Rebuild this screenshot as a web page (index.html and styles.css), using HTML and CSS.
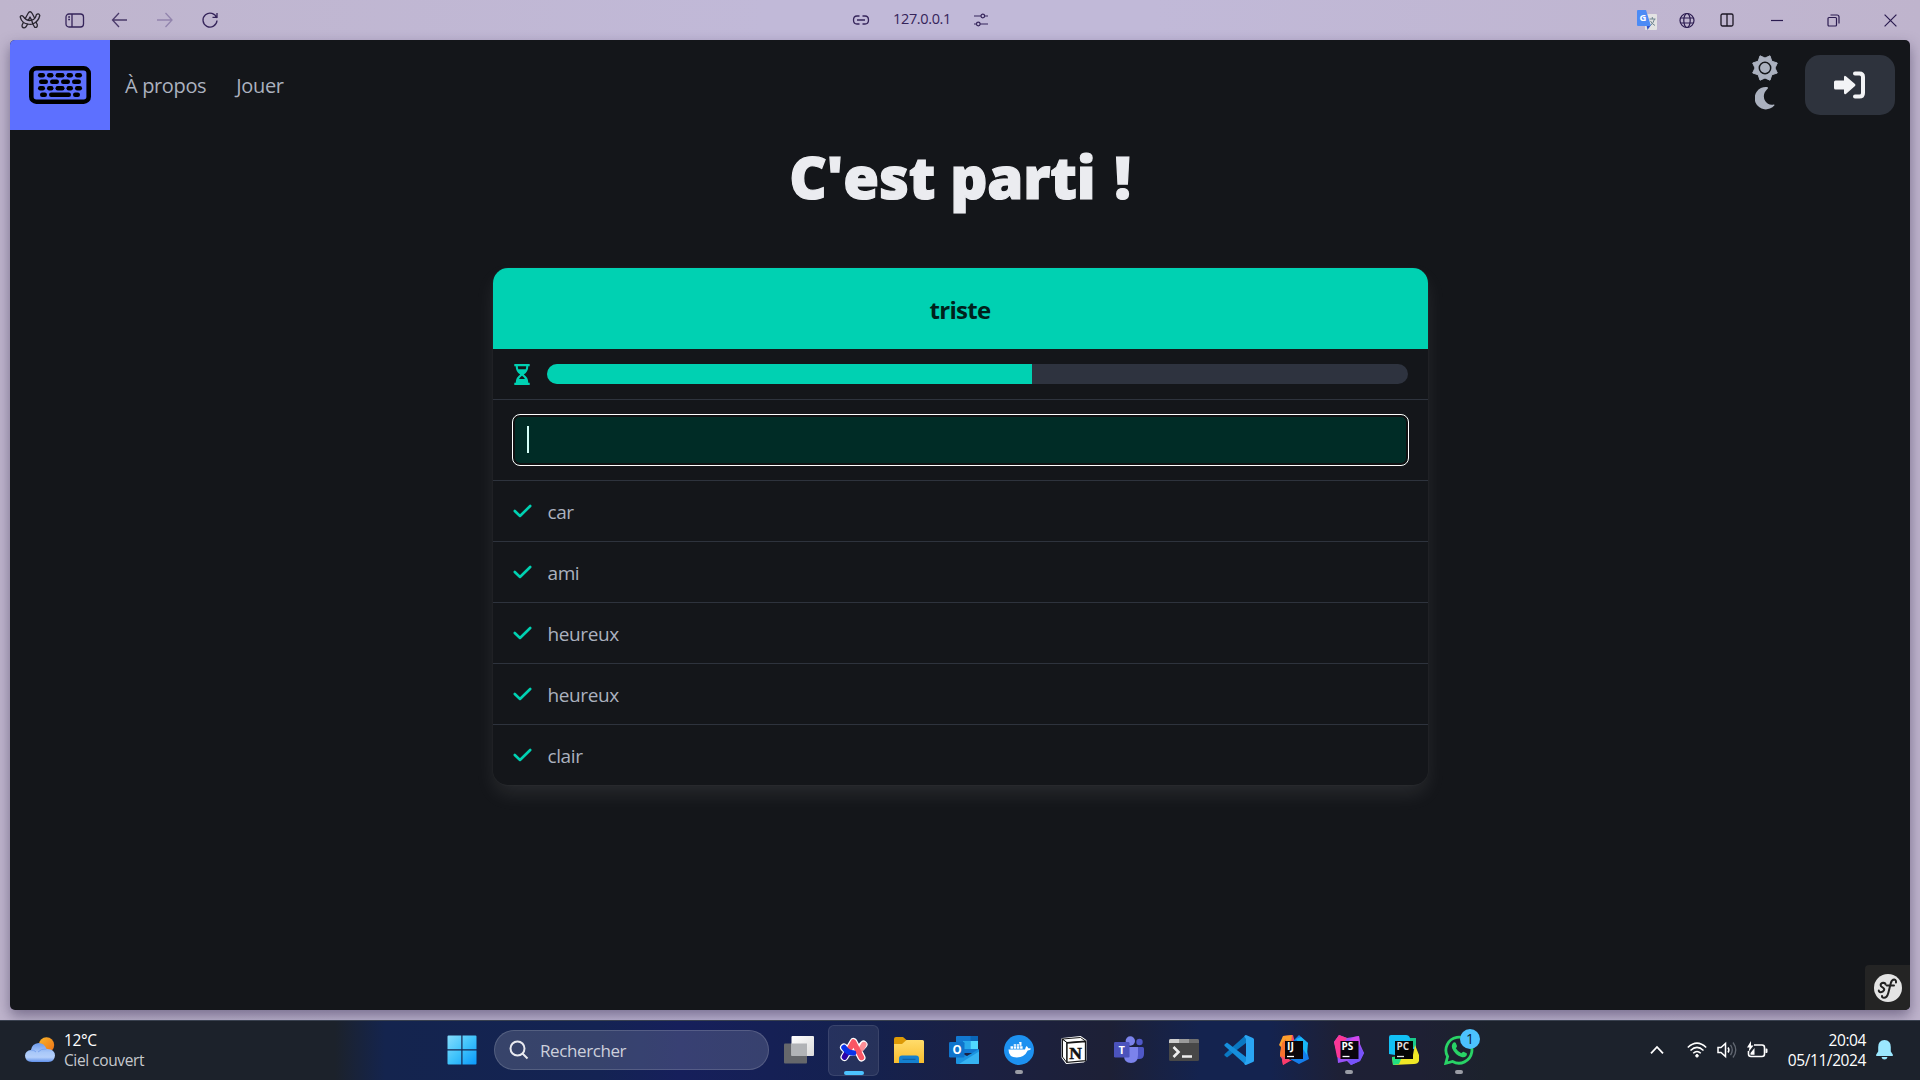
FILE: index.html
```html
<!DOCTYPE html>
<html lang="fr">
<head>
<meta charset="utf-8">
<title>C'est parti !</title>
<link rel="stylesheet" href="styles.css">
</head>
<body>
<div class="desktop">
  <header class="titlebar">
    <div class="tb-left">
      <span class="tb-btn"><svg width="22" height="20" viewBox="0 0 22 20" fill="none" stroke="#29252f" stroke-width="1.300" stroke-linejoin="round"><path d="M3 16.500Q2.600 15.500 4.300 12.600M6 9L9 3.500Q11 0 13.200 3.500L15.600 8M17 12L18.300 14.800Q18.600 18 15.700 17.300L13.800 14M8.700 14L7 16.800Q4.800 19 3 16.500"/><path d="M9.200 10.500L11 7L12.700 10.200M8.700 14Q11.500 14.800 13.800 14Q19.500 11.500 20.800 5.500Q19.500 2.800 17.300 4.800Q16.500 9 12.700 10.200Q8 11.500 4.500 6.800Q2.500 4.500 1.200 6.800Q2 10.500 4.500 12.500Q6.500 13.800 8.700 14M13.800 14L12.700 10.200"/></svg></span>
      <span class="tb-btn"><svg width="20" height="16" viewBox="0 0 20 16" fill="none" stroke="#35245a" stroke-width="1.3"><rect x="1" y="2" width="17.500" height="13" rx="3"/><path d="M7 2V15M3.200 5H5M3.200 7.500H5"/></svg></span>
      <span class="tb-btn"><svg width="18" height="16" viewBox="0 0 18 16" fill="none" stroke="#4a3a6a" stroke-width="1.300"><path d="M8 1L1.500 8L8 15M1.500 8H16"/></svg></span>
      <span class="tb-btn"><svg width="18" height="16" viewBox="0 0 18 16" fill="none" stroke="#9284ad" stroke-width="1.300"><path d="M9.500 1L16 8L9.500 15M16 8H1"/></svg></span>
      <span class="tb-btn"><svg width="18" height="18" viewBox="0 0 18 18" fill="none" stroke="#35245a" stroke-width="1.300"><path d="M15.700 7A7 7 0 1 0 16 9.500M16 2V6.300H11.500"/></svg></span>
    </div>
    <div class="tb-mid">
      <svg width="18" height="12" viewBox="0 0 18 12" fill="none" stroke="#35245a" stroke-width="1.300"><path d="M7.500 2H5Q1.500 2 1.500 6T5 10H7.500M10.500 2H13Q16.500 2 16.500 6T13 10H10.500M5 6H13"/></svg>
      <span class="tb-url">127.0.0.1</span>
      <svg width="16" height="14" viewBox="0 0 16 14" fill="none" stroke="#35245a" stroke-width="1.200"><path d="M1 3H8M11.500 3H15M1 11H3.500M7 11H15"/><circle cx="9.800" cy="3" r="1.800"/><circle cx="5.300" cy="11" r="1.800"/></svg>
    </div>
    <div class="tb-ext">
      <span><svg width="20" height="20" viewBox="0 0 20 20"><rect x="8" y="4" width="12" height="16" rx="1" fill="#e3e3e3"/><path d="M9.500 15H14L10.500 20Z" fill="#3052c8"/><path d="M1 0H9L14 16H1Q0 16 0 15V1Q0 0 1 0Z" fill="#4c8bf5"/><path d="M12.500 9H18.500M15.300 7V9M17.500 9Q16.500 13 13.500 15.500M13.500 11Q15 14 18 15.500" fill="none" stroke="#6f8590" stroke-width="1"/><text x="2.600" y="11.300" font-size="9.500" font-weight="700" fill="#fff">G</text></svg></span>
      <span><svg width="18" height="18" viewBox="0 0 18 18" fill="none" stroke="#2b1b50" stroke-width="1.200"><circle cx="9" cy="9.500" r="7"/><ellipse cx="9" cy="9.500" rx="3.200" ry="7"/><path d="M3 7H15M3 12H15"/></svg></span>
      <span><svg width="14" height="14" viewBox="0 0 14 14" fill="none" stroke="#1c1724" stroke-width="1.300"><rect x="1" y="1" width="12" height="12" rx="1.500"/><path d="M7 1V13"/></svg></span>
    </div>
    <div class="tb-win">
      <span><svg width="12" height="12" viewBox="0 0 12 12"><path d="M0 6.500H12" stroke="#2b1b50" stroke-width="1.200"/></svg></span>
      <span><svg width="13" height="13" viewBox="0 0 13 13" fill="none" stroke="#2b1b50" stroke-width="1.200"><rect x="1" y="3.500" width="8.500" height="8.500" rx="1"/><path d="M3.500 1H10Q12 1 12 3V9.500"/></svg></span>
      <span><svg width="13" height="13" viewBox="0 0 13 13" stroke="#2b1b50" stroke-width="1.200"><path d="M.6.6L12.400 12.400M12.400.6L.6 12.400"/></svg></span>
    </div>
  </header>

  <main class="window">
    <nav class="navbar">
      <a class="brand"><svg width="62" height="38" viewBox="0 0 62 38"><rect x="2.300" y="2.300" width="57.400" height="33.400" rx="5" fill="none" stroke="#000" stroke-width="4.600"/><g fill="#000"><rect x="9" y="7" width="7" height="4.400" rx="2.200"/><rect x="18" y="7" width="6.500" height="4.400" rx="2.200"/><rect x="26.500" y="7" width="9" height="4.400" rx="2.200"/><rect x="37.500" y="7" width="6.500" height="4.400" rx="2.200"/><rect x="46" y="7" width="7" height="4.400" rx="2.200"/><rect x="10" y="13.500" width="9" height="4.400" rx="2.200"/><rect x="21" y="13.500" width="9" height="4.400" rx="2.200"/><rect x="32" y="13.500" width="9" height="4.400" rx="2.200"/><rect x="43" y="13.500" width="9" height="4.400" rx="2.200"/><rect x="9" y="20" width="7" height="4.400" rx="2.200"/><rect x="18" y="20" width="6.500" height="4.400" rx="2.200"/><rect x="26.500" y="20" width="9" height="4.400" rx="2.200"/><rect x="37.500" y="20" width="6.500" height="4.400" rx="2.200"/><rect x="46" y="20" width="7" height="4.400" rx="2.200"/><rect x="11" y="26.500" width="7" height="4.400" rx="2.200"/><rect x="20" y="26.500" width="22" height="4.400" rx="2.200"/><rect x="44" y="26.500" width="7" height="4.400" rx="2.200"/></g></svg></a>
      <a class="nav-link">À propos</a>
      <a class="nav-link">Jouer</a>
      <div class="nav-end">
        <div class="theme">
          <svg width="26" height="26" viewBox="-13 -13 26 26"><path d="M0-10L5-12.200L6.800-6.800L12.300-5L10 0L12.300 5L6.800 6.800L5 12.200L0 10L-5 12.200L-6.800 6.800L-12.300 5L-10 0L-12.300-5L-6.800-6.800L-5-12.200Z" fill="#abb1bf" stroke="#abb1bf" stroke-linejoin="round"/><circle r="5.700" fill="none" stroke="#14161a" stroke-width="1.500"/></svg>
          <svg width="20" height="24" viewBox="0 0 20 24"><path d="M11.500 1A11.200 11.200 0 1 0 19.500 19.300Q19.800 18.300 18.700 18.500Q13 19.500 10.200 15Q6.500 8.500 12.800 2.500Q13.800 1.200 11.500 1Z" fill="#abb1bf"/></svg>
        </div>
        <a class="login"><svg width="34" height="28" viewBox="0 0 34 28"><path d="M2.500 9.500H11V6.500Q11 3.700 13.200 5.500L22 13Q23 14 22 15L13.200 22.700Q11 24.300 11 21.500V18.500H2.500Q1 18.500 1 17V11Q1 9.500 2.500 9.500Z" fill="#f3f4f6"/><path d="M22 2.500H26.500Q30 2.500 30 6V22Q30 25.500 26.500 25.500H22" fill="none" stroke="#f3f4f6" stroke-width="4" stroke-linecap="round"/></svg></a>
      </div>
    </nav>

    <h1 class="title">C'est parti <span class="mark">!</span></h1>

    <section class="panel">
      <p class="panel-heading">triste</p>
      <div class="panel-block timer">
        <span class="panel-icon"><svg width="16" height="21" viewBox="0 0 16 21"><path d="M.3 0H15.700V2.200H14.300Q14.300 7.500 9.800 10.500Q14.300 13.500 14.300 18.800H15.700V21H.3V18.800H1.700Q1.700 13.500 6.200 10.500Q1.700 7.500 1.700 2.200H.3Z" fill="#00d1b2"/><path d="M3.800 2.300H12.200Q12.200 3.800 11.700 5.200H4.300Q3.800 3.800 3.800 2.300ZM8 11.800Q10 13 11 15H5Q6 13 8 11.800Z" fill="#14161a"/></svg></span>
        <div class="progress"><div class="progress-value" style="width:56.33%"></div></div>
      </div>
      <div class="panel-block entry"><div class="input"><span class="caret"></span></div></div>
      <div class="panel-block word"><span class="panel-icon"><svg width="19" height="14" viewBox="0 0 19 14"><path d="M1.800 7L7 12L17.200 2" fill="none" stroke="#00d1b2" stroke-width="2.600" stroke-linecap="round" stroke-linejoin="round"/></svg></span>car</div>
      <div class="panel-block word"><span class="panel-icon"><svg width="19" height="14" viewBox="0 0 19 14"><path d="M1.800 7L7 12L17.200 2" fill="none" stroke="#00d1b2" stroke-width="2.600" stroke-linecap="round" stroke-linejoin="round"/></svg></span>ami</div>
      <div class="panel-block word"><span class="panel-icon"><svg width="19" height="14" viewBox="0 0 19 14"><path d="M1.800 7L7 12L17.200 2" fill="none" stroke="#00d1b2" stroke-width="2.600" stroke-linecap="round" stroke-linejoin="round"/></svg></span>heureux</div>
      <div class="panel-block word"><span class="panel-icon"><svg width="19" height="14" viewBox="0 0 19 14"><path d="M1.800 7L7 12L17.200 2" fill="none" stroke="#00d1b2" stroke-width="2.600" stroke-linecap="round" stroke-linejoin="round"/></svg></span>heureux</div>
      <div class="panel-block word"><span class="panel-icon"><svg width="19" height="14" viewBox="0 0 19 14"><path d="M1.800 7L7 12L17.200 2" fill="none" stroke="#00d1b2" stroke-width="2.600" stroke-linecap="round" stroke-linejoin="round"/></svg></span>clair</div>
    </section>

    <div class="debug"><svg width="28" height="28" viewBox="0 0 28 28"><circle cx="14" cy="14" r="14" fill="#e4e4e4"/><path d="M11.500 10.500Q11.500 8.800 9.300 8.800Q6.800 9 6.600 11Q6.500 12.300 8.500 13.300Q10.800 14.500 10 16.300Q9 18.300 6.600 18.200Q4.800 18 4.800 16.500" fill="none" stroke="#222" stroke-width="2" stroke-linecap="round"/><path d="M22 8.500Q22.300 5.800 20.300 5.600Q17.800 5.500 16.700 9.500L14.300 19Q13 23.800 10 23.800Q7.800 23.600 8 22M12.800 11.500H20" fill="none" stroke="#222" stroke-width="2" stroke-linecap="round"/></svg></div>
  </main>

  <footer class="taskbar">
    <div class="weather">
      <svg width="30" height="26" viewBox="0 0 30 26"><defs><linearGradient id="sun" x1="0" x2="1" y2="1"><stop stop-color="#f8b62a"/><stop offset="1" stop-color="#ee6f16"/></linearGradient><linearGradient id="cloud" x2="0" y2="1"><stop stop-color="#6c9aec"/><stop offset=".5" stop-color="#a9c8f9"/><stop offset=".75" stop-color="#b4cffb"/><stop offset="1" stop-color="#5f90ea"/></linearGradient></defs><circle cx="21.500" cy="8" r="7.700" fill="url(#sun)"/><path d="M7 25Q0 24.500 0 18.500Q.5 13.500 6 13Q7 6.500 13.500 6Q19.500 6 21.500 12Q29.500 11.500 30 18.500Q29.500 24.500 23.500 25Z" fill="url(#cloud)"/><path d="M6 13Q9 12.700 11 15M13 15Q16 11.500 21.500 12" fill="none" stroke="#7aa3ee"/></svg>
      <div class="weather-text"><span class="temp">12°C</span><span class="sky">Ciel couvert</span></div>
    </div>

    <div class="dock">
      <span class="app"><svg width="30" height="30" viewBox="0 0 30 30"><defs><linearGradient id="win" x2="1" y2="1" gradientUnits="objectBoundingBox"><stop stop-color="#86dcfc"/><stop offset=".5" stop-color="#3fc3fb"/><stop offset="1" stop-color="#0a98fb"/></linearGradient></defs><path d="M1.500.5H14.300V14.300H.5V1.500Q.5.500 1.500.5ZM15.500.5H28.500Q29.500.5 29.500 1.500V14.300H15.500ZM.5 15.500H14.300V29.500H1.500Q.5 29.500.5 28.500ZM15.500 15.500H29.500V28.500Q29.500 29.500 28.500 29.500H15.500Z" fill="url(#win)"/></svg></span>
      <div class="search"><svg width="20" height="20" viewBox="0 0 20 20" fill="none" stroke="#e9eaf0" stroke-width="2"><circle cx="8.500" cy="8.500" r="7"/><path d="M13.500 13.500L18.500 18.500"/></svg><span>Rechercher</span></div>
      <span class="app"><svg width="30" height="28" viewBox="0 0 30 28"><defs><linearGradient id="tv" x2="1" y2="1"><stop stop-color="#fff"/><stop offset="1" stop-color="#dadada"/></linearGradient></defs><rect y="7.500" width="23" height="20" rx="1" fill="#65676b"/><rect x="7.500" width="22.500" height="20" rx="1" fill="url(#tv)"/><path d="M7.500 7.500H23V20H7.500Z" fill="#b1b3b6"/></svg></span>
      <span class="app active"><svg width="30" height="26" viewBox="0 0 30 26" stroke-linecap="round" stroke-linejoin="round" fill="none"><g stroke="#fff" stroke-width="8"><path d="M5.500 20L14.500 5L22.500 20.500M5 10.500Q14 20.500 24.500 7.500"/></g><path d="M24.800 7.500Q23 12 19 14.500" stroke="#fb8e96" stroke-width="5.500"/><path d="M5.500 20L9 14" stroke="#2b03a8" stroke-width="5.500"/><path d="M9.500 13.500L14.500 5L22.500 20.500" stroke="#fa5664" stroke-width="5.500"/><path d="M5 10.500Q8.500 16 14.500 16" stroke="#0a33e8" stroke-width="5.500"/></svg><i class="bar"></i></span>
      <span class="app"><svg width="30" height="28" viewBox="0 0 30 28"><defs><linearGradient id="fold" x2="0" y2="1"><stop stop-color="#ffdc6b"/><stop offset="1" stop-color="#f8bd2e"/></linearGradient></defs><path d="M0 3Q0 1 2 1H9L12.500 4V10H0Z" fill="#dd9a06"/><path d="M0 8H8L12.500 4H28.500Q30 4 30 5.500V27H0Z" fill="url(#fold)"/><path d="M5 27V22.500Q5 19.500 8 19.500H22Q25 19.500 25 22.500V27Z" fill="#1480cf"/><path d="M8.500 23.300H21.500" stroke="#0b5a9c"/></svg></span>
      <span class="app"><svg width="30" height="28" viewBox="0 0 30 28"><path d="M8 0H28Q29 0 29 1V17H7V1Q7 0 8 0Z" fill="#1278d1"/><path d="M14 5H21.500V13H14Z" fill="#28a8ea"/><path d="M21.500 5H29V13H21.500Z" fill="#50d9ff"/><path d="M21.500 0H29V5H21.500Z" fill="#0a66b8"/><path d="M7 15L18 20L30 13V27Q30 28 29 28H8Q7 28 7 27Z" fill="#1b93e0"/><path d="M10 28L30 15.500V27Q30 28 29 28Z" fill="#36b3f2"/><rect y="6" width="15.500" height="15.500" rx="1.300" fill="#0f74cc"/><text x="3.600" y="17.800" font-size="11.500" font-weight="700" fill="#fff">O</text></svg></span>
      <span class="app"><svg width="30" height="30" viewBox="0 0 30 30"><circle cx="15" cy="15" r="15" fill="#1d91f0"/><path d="M4.500 14.500H21Q21.500 12 22.500 11Q23.800 12 24.300 13.300Q26 13 27.200 13.800Q26.300 15.500 23.700 15.600Q20.500 22.500 12.800 22.500Q4.500 22.500 4.500 14.500Z" fill="#fff"/><path d="M6.500 11.300H9V13.700H6.500ZM9.700 11.300H12.200V13.700H9.700ZM12.900 11.300H15.400V13.700H12.900ZM16.100 11.300H18.600V13.700H16.100ZM9.700 9.200H12.200V10.700H9.700ZM12.900 9.200H15.400V10.700H12.900ZM15 7H17.500V10.700H16.100Z" fill="#fff"/></svg><i class="dot"></i></span>
      <span class="app"><svg width="26" height="28" viewBox="0 0 26 28"><path d="M1.500 3L19.500 1L24.500 4.500V24L22.500 25.500L5.500 27L1.500 21.500Z" fill="#fff" stroke="#fff" stroke-width="2" stroke-linejoin="round"/><path d="M1.500 3L19.500 1.500L24.500 5L5.800 6.500ZM1.500 3L5.800 6.500V26.500L1.500 21Z" fill="#fff" stroke="#161616"/><path d="M6 7L24.500 5.500V24.700L6 26.300Z" fill="#fff" stroke="#161616" stroke-width="1.300"/><text x="8.300" y="22.500" font-family="Liberation Serif,serif" font-size="17.500" font-weight="700" fill="#111" stroke="#111" stroke-width=".5">N</text></svg></span>
      <span class="app"><svg width="30" height="28" viewBox="0 0 30 28"><circle cx="25.500" cy="6" r="3.200" fill="#5059c9"/><circle cx="16.300" cy="5" r="4.700" fill="#7b83eb"/><path d="M20 11H28.500Q30 11 30 12.500V18Q30 23 25 23H20Z" fill="#4f58c7"/><path d="M10 11H24V19Q24 27 17 27Q10 27 10 20Z" fill="#7b83eb"/><rect y="6" width="15.500" height="15.500" rx="1.300" fill="#4b53bc"/><text x="4.400" y="17.800" font-size="11" font-weight="700" fill="#fff">T</text></svg></span>
      <span class="app"><svg width="30" height="22" viewBox="0 0 30 22"><rect width="30" height="22" rx="1.500" fill="#484848"/><path d="M1.500 0H10V4H0V1.500Q0 0 1.500 0Z" fill="#cfcfcf"/><path d="M10 0H20V4H10Z" fill="#9b9b9b"/><path d="M20 0H28.500Q30 0 30 1.500V4H20Z" fill="#6f6f6f"/><path d="M4.500 8L9.500 13L4.500 18M13 17.500H23" fill="none" stroke="#eee" stroke-width="2.600"/></svg></span>
      <span class="app"><svg width="30" height="30" viewBox="0 0 30 30"><path d="M22 0V8L3 22.500L.5 20.500Q0 19.700.7 19L21 .7Z" fill="#0a78c2"/><path d="M3 7.500L22 22V30L.7 11Q0 10.300.5 9.500Z" fill="#168fdd"/><path d="M22 0L29 3Q30 3.500 30 4.500V25.500Q30 26.500 29 27L22 30Q20.500 30 20.300 28.500L22 26V4L20.300 1.500Q20.500 0 22 0Z" fill="#2aa5f3"/></svg></span>
      <span class="app"><svg width="30" height="30" viewBox="0 0 30 30"><path d="M4 1L14 0L16 8L10 26L4 30L3 24L1 21Z" fill="#f34a6c"/><path d="M4 1L13 0L12 8L1 22L2 12L0 10Z" fill="#fb9f2c"/><path d="M3 8L7 4V23L1 21Z" fill="#f9722e"/><path d="M14 6L20 0L29 8L27 12L30 24L20 29L11 24Z" fill="#147dea"/><path d="M17 4L22 2L29 8L28 20Z" fill="#18b8f6"/><path d="M3 25H13L4 30Z" fill="#fb3a6c"/><rect x="6" y="6" width="18" height="18" fill="#0b0508"/><text x="8" y="15" font-size="10.500" font-weight="700" fill="#fff">IJ</text><path d="M8 21.500H15" stroke="#fff" stroke-width="1.300"/></svg></span>
      <span class="app"><svg width="30" height="30" viewBox="0 0 30 30"><path d="M5 0L13 3L25 1L26 9L30 18L26 26L17 30L13 26L4 28L3 18L0 7Z" fill="#9a51f5"/><path d="M5 0L13 3L7 12V24L3 22L0 7Z" fill="#fb3795"/><path d="M20 2L25 1L26 9L24 12L15 5Z" fill="#d247ed"/><path d="M24 10L30 18L26 26L17 30L14 25L24 22Z" fill="#7653fb"/><rect x="6.500" y="6" width="18" height="18" fill="#0a0510"/><text x="7.600" y="15.300" font-size="10" font-weight="700" fill="#fff">PS</text><path d="M8.500 21.500H15.500" stroke="#fff" stroke-width="1.300"/></svg><i class="dot"></i></span>
      <span class="app"><svg width="30" height="30" viewBox="0 0 30 30"><path d="M0 2Q0 0 2 0H17Q20 0 21 3L27 3V14H6V20L0 19Z" fill="#12c0f5"/><path d="M21 3H27V12H21Z" fill="#19c98b"/><path d="M26 10L30 20V26Q29 29 25 29L4 30L3 22L24 20Z" fill="#f0e726"/><path d="M3 22H13L10 29L4 30Z" fill="#21df82"/><rect x="6" y="6" width="18" height="18" fill="#050505"/><text x="7.500" y="15" font-size="10" font-weight="700" fill="#ddd">PC</text><path d="M8 21.500H15" stroke="#ddd" stroke-width="1.300"/></svg></span>
      <span class="app"><svg width="30" height="30" viewBox="0 0 30 30"><path d="M1.800 28.300L3.600 21.500A13 13 0 1 1 8.600 26.500Z" fill="none" stroke="#29d366" stroke-width="2.800"/><path d="M9.500 7.500Q11 6.600 11.800 8L13 11Q13.200 12 11.800 13.300Q14 17 17.300 18.300Q18.700 16.500 19.500 16.700L22.700 18.300Q23.300 19 22.500 20.700Q20.500 23 17.500 22Q11 20 8.200 13.500Q7 10 9.500 7.500Z" fill="#29d366"/></svg><b class="badge">1</b><i class="dot"></i></span>
    </div>

    <div class="tray">
      <svg class="chev" width="14" height="10" viewBox="0 0 14 10"><path d="M1 8.300L7 2L13 8.300" fill="none" stroke="#fff" stroke-width="1.800"/></svg>
      <svg width="20" height="16" viewBox="0 0 20 16" fill="none" stroke="#fff" stroke-width="1.500"><path d="M.8 5.500Q10-3.300 19.200 5.500M3.500 8.500Q10 2.300 16.500 8.500M6.200 11.300Q10 7.700 13.800 11.300"/><circle cx="10" cy="13.800" r="1.300" fill="#fff" stroke-width="1"/></svg>
      <svg width="20" height="18" viewBox="0 0 20 18" fill="none" stroke="#fff" stroke-width="1.500"><path d="M1 6.500H4L8.500 2.500V15.500L4 11.500H1Z"/><path d="M11 6.500Q12.800 9 11 11.500"/><path d="M13.500 3.800Q17 9 13.500 14.200M16 1.500Q21.500 9 16 16.500" stroke="#626872" stroke-width="1.300"/></svg>
      <svg width="21" height="18" viewBox="0 0 21 18"><path d="M7 4H15Q17.500 4 17.500 6.500V13Q17.500 15.500 15 15.500H4Q1.500 15.500 1.500 13V10" fill="none" stroke="#fff" stroke-width="1.600"/><path d="M18.500 7.500H19.500Q20.500 7.500 20.500 8.500V11Q20.500 12 19.500 12H18.500ZM4 0L0 6.500H2.500L1.500 11L6.500 4.500H4ZM3.500 12L7.500 7V13.700H3.500Z" fill="#fff"/></svg>
      <div class="clock"><span>20:04</span><span>05/11/2024</span></div>
      <svg width="17" height="20" viewBox="0 0 17 20"><path d="M8.500 0Q14.800.3 14.800 7V11.500L16.800 14.500V16H.2V14.500L2.200 11.500V7Q2.200.3 8.500 0ZM5.500 17H11.500Q11 19.500 8.500 19.500T5.500 17Z" fill="#9be8ff"/></svg>
    </div>
  </footer>
</div>
</body>
</html>
```
FILE: styles.css
```css
* { box-sizing: border-box; }

body {
  margin: 0;
  font-family: "Open Sans", "Noto Sans", sans-serif;
}

svg { display: block; flex: none; }

.desktop {
  width: 1920px;
  height: 1080px;
  overflow: hidden;
  display: flex;
  flex-direction: column;
  background: linear-gradient(90deg, #bfb5cd, #c1b9d8 40%, #c1b9d8 60%, #bfb4cd);
}

/* Browser title bar */
.titlebar {
  height: 40px;
  display: flex;
  align-items: center;
}

.tb-left {
  width: 852px;
  padding-left: 7px;
  display: flex;
}

.tb-btn {
  width: 45px;
  display: flex;
  align-items: center;
  justify-content: center;
}

.tb-mid {
  display: flex;
  align-items: center;
}

.tb-url {
  width: 57px;
  margin: 0 23px 2px 23px;
  color: #35245a;
  font-size: 14.500px;
  line-height: 20px;
  letter-spacing: -0.35px;
  white-space: nowrap;
}

.tb-ext,
.tb-win {
  height: 38px;
  display: flex;
  align-items: center;
}

.tb-ext { margin-left: auto; margin-right: 1px; height: 40px; }
.tb-ext span { width: 40px; display: flex; justify-content: center; }
.tb-win { margin-right: 1px; }
.tb-win span { width: 57px; display: flex; justify-content: center; }

/* Page viewport */
.window {
  position: relative;
  width: 1900px;
  height: 970px;
  margin: 0 10px;
  border-radius: 5px;
  overflow: hidden;
  background: #14161a;
  box-shadow: 0 6px 14px rgba(50, 40, 75, 0.5);
  flex: none;
}

.navbar {
  height: 90px;
  display: flex;
  align-items: center;
}

.brand {
  width: 100px;
  height: 90px;
  display: flex;
  align-items: center;
  justify-content: center;
  background: #5d70ff;
}

.nav-link {
  padding: 0 15px;
  color: #abb1bf;
  font-size: 20px;
  line-height: 30px;
  letter-spacing: -0.35px;
  margin-top: 2px;
}

.nav-end {
  margin-left: auto;
  padding-right: 15px;
  display: flex;
  align-items: center;
  gap: 27px;
}

.theme {
  margin-bottom: 5px;
  display: flex;
  flex-direction: column;
  align-items: center;
  gap: 5px;
}

.login {
  width: 90px;
  height: 60px;
  display: flex;
  align-items: center;
  justify-content: center;
  border-radius: 15px;
  background: #2e333d;
}

.title {
  margin: 14px 0 0;
  height: 69px;
  color: #ebecf0;
  font-size: 58px;
  font-weight: 800;
  line-height: 66px;
  letter-spacing: -0.2px;
  text-align: center;
  -webkit-text-stroke: 1.200px #ebecf0;
}

.mark { margin-left: 4px; }

/* Word panel */
.panel {
  width: 935px;
  margin: 55px auto 0;
  border-radius: 15px;
  color: #abb1bf;
  font-size: 19px;
  box-shadow: 0 10px 20px -2.500px rgba(235, 236, 240, 0.1), 0 0 0 1px rgba(235, 236, 240, 0.02);
}

.panel-heading {
  height: 81px;
  margin: 0;
  border-radius: 15px 15px 0 0;
  background: #00d1b2;
  color: #00211c;
  font-size: 24px;
  font-weight: 700;
  line-height: 84px;
  letter-spacing: -0.7px;
  text-align: center;
}

.panel-block {
  height: 61px;
  padding: 0 20px;
  display: flex;
  align-items: center;
  letter-spacing: -0.4px;
  border-bottom: 1px solid #2e333d;
}

.panel-icon {
  width: 20px;
  margin-right: 15px;
  display: flex;
  justify-content: center;
}

.word { padding-top: 2px; }
.word .panel-icon { margin-top: -2px; }
.word:last-child { height: 60px; border-bottom: 0; }

.timer { height: 51px; }
.timer .panel-icon { margin: 0 15px 0 -1px; }

.progress {
  flex: 1;
  height: 20px;
  border-radius: 10px;
  overflow: hidden;
  background: #2e333f;
}

.progress-value { height: 100%; background: #00d1b2; }

.entry { height: 81px; padding: 0 18.500px 0 19.500px; }

.input {
  width: 100%;
  height: 52px;
  padding: 11px 14px;
  border: 1px solid #fff;
  border-radius: 8px;
  background: #002c26;
  box-shadow: inset 0 0 0 2px #101112;
}

.caret {
  display: block;
  width: 2px;
  height: 27px;
  background: #d5fff8;
}

.debug {
  position: absolute;
  right: 0;
  bottom: 0;
  width: 45px;
  height: 45px;
  display: flex;
  align-items: center;
  justify-content: center;
  border-radius: 4px 0 0;
  background: #242424;
}

/* Taskbar */
.taskbar {
  position: relative;
  z-index: 1;
  height: 60px;
  margin-top: 10px;
  padding-bottom: 1px;
  display: flex;
  align-items: center;
  border-top: 1px solid #39414f;
  background: linear-gradient(90deg, #1c222b 0, #1c222b 335px, #14244e 385px, #142353 600px, #161f5b 680px, #14214f 860px, #1b2042 980px, #1d2036 1110px, #14234f 1200px, #14234f 1270px, #1e2035 1340px, #1e2034 1420px, #1c222c 1490px);
}

.weather {
  width: 434px;
  padding-left: 25px;
  display: flex;
  align-items: center;
  gap: 9px;
}

.weather-text,
.clock {
  display: flex;
  flex-direction: column;
  margin-bottom: 1px;
  color: #fff;
  font-size: 15.500px;
  line-height: 20px;
  letter-spacing: -0.4px;
  white-space: nowrap;
}

.sky { color: #c6c9ce; }

.dock { display: flex; align-items: center; }

.app {
  position: relative;
  width: 51px;
  height: 51px;
  margin: 0 2px;
  display: flex;
  align-items: center;
  justify-content: center;
}

.active {
  border: 1px solid rgba(255, 255, 255, 0.09);
  border-radius: 6px;
  background: rgba(255, 255, 255, 0.08);
}

.bar,
.dot {
  position: absolute;
  bottom: 2px;
  left: 50%;
  width: 8px;
  height: 4px;
  border-radius: 2px;
  background: #9a9ca5;
  transform: translateX(-50%);
}

.bar { bottom: 0; width: 20px; background: #4cc2ff; }

.badge {
  position: absolute;
  top: 4px;
  right: 4px;
  width: 20px;
  height: 20px;
  border-radius: 50%;
  background: #4cc2ff;
  color: #0d2433;
  font-size: 14px;
  font-weight: 400;
  line-height: 20px;
  text-align: center;
}

.search {
  width: 275px;
  height: 40px;
  margin: 0 2px 0 5px;
  padding-left: 14px;
  display: flex;
  align-items: center;
  gap: 11px;
  border: 1px solid rgba(255, 255, 255, 0.15);
  border-radius: 20px;
  background: rgba(255, 255, 255, 0.15);
  color: #cdd0dc;
  font-size: 17px;
  letter-spacing: -0.4px;
}

.tray {
  margin-left: auto;
  padding-right: 27px;
  display: flex;
  align-items: center;
  gap: 10px;
}

.chev { margin-right: 13px; }

.clock {
  margin-left: 10px;
  align-items: flex-end;
}
```
